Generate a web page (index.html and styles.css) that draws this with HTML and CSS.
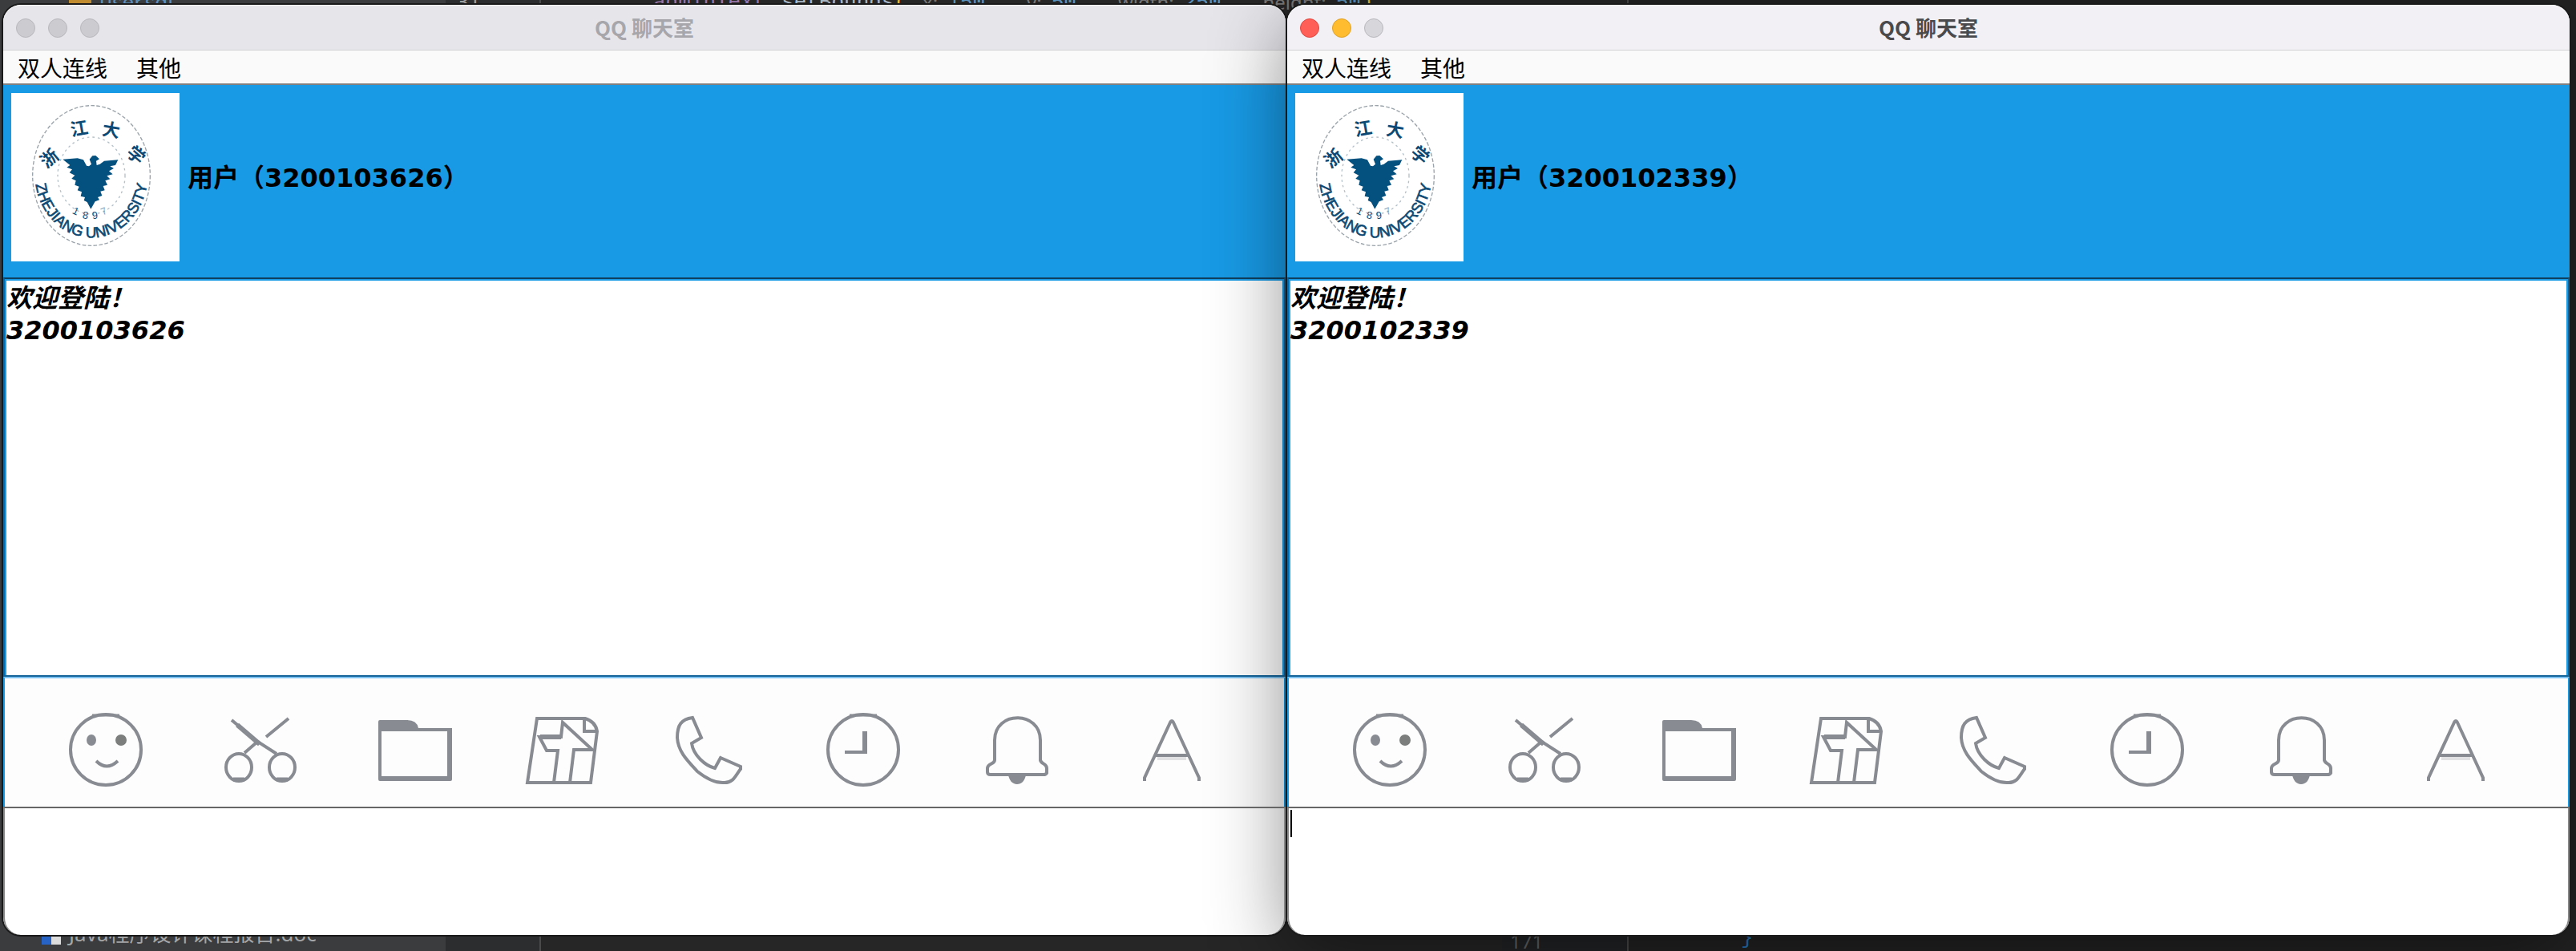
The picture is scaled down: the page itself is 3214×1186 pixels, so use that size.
FILE: index.html
```html
<!DOCTYPE html>
<html lang="zh-CN">
<head>
<meta charset="utf-8">
<title>QQ聊天室</title>
<link rel="stylesheet" href="styles.css">
</head>
<body>
<svg class="defs" aria-hidden="true">
  <symbol id="seal" viewBox="-48 18 630 630">
    <ellipse cx="252" cy="327" rx="220" ry="262" class="ring"/>
    <ellipse cx="252" cy="327" rx="126" ry="144" class="ring faint"/>
    <path fill="#04507f" d="M145 266 200 262 222 268 234 290 243 292 252 284 245 266 256 253 268 252 282 265 270 272 272 288 284 284 300 272 352 268 342 288 322 292 336 300 318 310 332 322 310 328 322 340 304 346 312 362 296 366 302 382 286 386 292 402 276 408 282 418 266 424 250 452 236 426 224 420 228 408 212 404 216 388 200 382 206 368 190 362 194 346 178 338 190 326 170 316 180 304 160 296 172 288Z"/>
    <g class="seal-han">
      <text transform="translate(110 280) rotate(-40)">浙</text>
      <text transform="translate(210 174) rotate(-10)">江</text>
      <text transform="translate(322 180) rotate(10)">大</text>
      <text transform="translate(404 268) rotate(40)">学</text>
    </g>
    <g class="seal-year">
      <text transform="translate(188 472) rotate(25)">1</text>
      <text transform="translate(228 488) rotate(8)">8</text>
      <text transform="translate(267 488) rotate(-8)">9</text>
      <text transform="translate(304 472) rotate(-25)" opacity=".5">7</text>
    </g>
    <path id="seal-arc" fill="none" d="M42 352A212 240 0 0 0 462 352"/>
    <text class="seal-name"><textPath href="#seal-arc" startOffset="50%">ZHEJIANG UNIVERSITY</textPath></text>
  </symbol>
  <symbol id="smile" viewBox="0 0 120 120">
    <circle cx="60" cy="69" r="44"/><path d="M43 26h34" stroke-width="3"/>
    <ellipse cx="42" cy="57" rx="6" ry="7" class="solid"/><circle cx="79" cy="57" r="7" fill="#7c7e7e" stroke="none"/>
    <path d="M48 83Q61 96 75 83"/>
  </symbol>
  <symbol id="scissors" viewBox="0 0 120 120">
    <path d="M27 32 58 58 83 74M98 30 70 53M58 60 43 73"/><path d="M34 38 62 62" stroke-width="6"/>
    <ellipse cx="36" cy="91" rx="16" ry="17"/><ellipse cx="90" cy="91" rx="16" ry="17"/>
    <path d="M29 106h14M83 106h14" stroke-width="5"/>
  </symbol>
  <symbol id="folder" viewBox="0 0 120 120">
    <path class="solid" fill-rule="evenodd" d="M20 34q0-2 2-2H56q12 0 14 10H112V106q0 2-2 2H22q-2 0-2-2ZM24 46V102H106V46Z"/>
  </symbol>
  <symbol id="share" viewBox="0 0 120 120">
    <path d="M28 30H88Q101 34 103 46L95 110H16ZM87 32V46H103"/>
    <path d="M49 110 54 70H40L31 53H58L60 35 97 69H74L69 110"/><path d="M32 53H58" stroke-width="6"/>
  </symbol>
  <symbol id="phone" viewBox="0 0 120 120">
    <path d="M32 29C18 31 13 38 13 54 14 71 25 82 38 96 48 104 61 111 72 110 83 110 85 102 92 93V90L67 79 60 92C48 89 33 76 31 61L43 54Z"/>
  </symbol>
  <symbol id="clock" viewBox="0 0 120 120">
    <circle cx="55" cy="69" r="44"/><path d="M38 26h34" stroke-width="3"/>
    <path class="solid" d="M54 46h6V74H32V70H54Z"/>
  </symbol>
  <symbol id="bell" viewBox="0 0 120 120">
    <path d="M29 82V57C29 20 86 20 86 57V82C87 87 94 86 94 92V98Q93 100 90 100H24Q20 100 20 97V92C20 86 29 87 29 82Z"/>
    <path class="solid" d="M46 100H68C67 107 63 112 57 112S47 107 46 100Z"/>
  </symbol>
  <symbol id="font" viewBox="0 0 120 120">
    <path d="M26 108V104L58 35Q60 31 62 35L94 104V108"/><path d="M40 76H80"/><path d="M42 80H78" stroke="#e1e1e4"/>
  </symbol>
</svg>

<div class="backdrop" aria-hidden="true">
  <div class="tree">
    <div class="file sql"><i class="badge"></i>user.sql</div>
    <div class="file doc"><i class="badge"></i>Java程序设计课程报告.doc</div>
  </div>
  <div class="gutter">31</div>
  <div class="editor">
    <div class="code"><b class="field">adminText</b><b class="call">.setBounds<em>(</em></b><span class="hint">x:</span><b class="num">150</b><span class="hint">y:</span><b class="num">50</b><span class="hint">width:</span><b class="num">250</b><span class="hint">height:</span><b class="num">50<em>);</em></b></div>
    <span class="line">171</span>
  </div>
  <div class="second">
    <span class="brace">}</span>
  </div>
</div>

<main class="desktop">
  <section class="window inactive">
    <header class="titlebar">
      <div class="lights"><button aria-label="关闭"></button><button aria-label="最小化"></button><button aria-label="缩放"></button></div>
      <h1>QQ 聊天室</h1>
    </header>
    <nav class="menubar"><button>双人连线</button><button>其他</button></nav>
    <div class="profile"><svg class="avatar" role="img" aria-label="ZHEJIANG UNIVERSITY"><use href="#seal"/></svg><span>用户（3200103626）</span></div>
    <div class="log"><div class="messages">欢迎登陆！<br>3200103626</div></div>
    <div class="tools">
      <button aria-label="表情"><svg><use href="#smile"/></svg></button>
      <button aria-label="截图"><svg><use href="#scissors"/></svg></button>
      <button aria-label="文件"><svg><use href="#folder"/></svg></button>
      <button aria-label="分享"><svg><use href="#share"/></svg></button>
      <button aria-label="电话"><svg><use href="#phone"/></svg></button>
      <button aria-label="历史"><svg><use href="#clock"/></svg></button>
      <button aria-label="提醒"><svg><use href="#bell"/></svg></button>
      <button aria-label="字体"><svg><use href="#font"/></svg></button>
    </div>
    <div class="compose"><textarea aria-label="输入消息"></textarea></div>
  </section>

  <section class="window active">
    <header class="titlebar">
      <div class="lights"><button class="close" aria-label="关闭"></button><button class="minimize" aria-label="最小化"></button><button aria-label="缩放"></button></div>
      <h1>QQ 聊天室</h1>
    </header>
    <nav class="menubar"><button>双人连线</button><button>其他</button></nav>
    <div class="profile"><svg class="avatar" role="img" aria-label="ZHEJIANG UNIVERSITY"><use href="#seal"/></svg><span>用户（3200102339）</span></div>
    <div class="log"><div class="messages">欢迎登陆！<br>3200102339</div></div>
    <div class="tools">
      <button aria-label="表情"><svg><use href="#smile"/></svg></button>
      <button aria-label="截图"><svg><use href="#scissors"/></svg></button>
      <button aria-label="文件"><svg><use href="#folder"/></svg></button>
      <button aria-label="分享"><svg><use href="#share"/></svg></button>
      <button aria-label="电话"><svg><use href="#phone"/></svg></button>
      <button aria-label="历史"><svg><use href="#clock"/></svg></button>
      <button aria-label="提醒"><svg><use href="#bell"/></svg></button>
      <button aria-label="字体"><svg><use href="#font"/></svg></button>
    </div>
    <div class="compose"><textarea aria-label="输入消息"></textarea><i class="caret"></i></div>
  </section>
</main>
</body>
</html>
```

FILE: styles.css
```css
* { box-sizing: border-box; }

body {
  margin: 0;
  height: 100vh;
  overflow: hidden;
  position: relative;
  background: #232323;
  font-family: "DejaVu Sans", "Noto Sans CJK SC", sans-serif;
}

button {
  padding: 0;
  border: 0;
  background: none;
  font: inherit;
  color: inherit;
}

.defs { position: absolute; width: 0; height: 0; }

/* IDE behind the chat windows */
.backdrop {
  position: absolute;
  inset: 0;
  display: flex;
  overflow: hidden;
  font: 26px/32px "Noto Sans", "Noto Sans CJK SC", sans-serif;
}

.tree {
  width: 556px;
  display: flex;
  flex-direction: column;
  justify-content: space-between;
  background: #3a3c3e;
}

.file { display: flex; align-items: center; gap: 10px; }
.sql { margin: -14px 0 0 86px; color: #5c8fbd; }
.doc { margin: 0 0 6px 52px; color: #a5a6a7; }
.badge { width: 28px; height: 28px; background: #c08a2e; }
.doc .badge { width: 24px; background: linear-gradient(90deg, #2763c4 50%, #dcdcdc 50%); }

.gutter {
  width: 119px;
  margin-top: -14px;
  padding-left: 14px;
  border-right: 2px solid #4a4a4a;
  background: #2b2d2f;
  color: #a0a0a0;
}

.editor {
  width: 1357px;
  display: flex;
  flex-direction: column;
  justify-content: space-between;
  align-items: flex-start;
  border-right: 2px solid #4a4a4a;
  background: #262626;
}

.code {
  display: flex;
  margin: -13px 0 0 140px;
  color: #777;
  font-size: 24px;
  white-space: nowrap;
}
.code b { font: 26px/32px "Liberation Mono", monospace; margin-right: 20px; }
.code .num { color: #5b92bd; margin-right: 52px; }
.code .field { color: #9876aa; margin-right: 4px; }
.code .call { color: #a9b7c6; }
.code .hint { margin-right: 12px; }
.code em { color: #e8ba36; font-style: normal; }

.line {
  align-self: flex-end;
  width: 156px;
  padding-left: 10px;
  background: #222426;
  color: #666;
  font-size: 24px;
  line-height: 24px;
}

.second {
  flex: 1;
  display: flex;
  align-items: flex-end;
  padding-left: 140px;
  color: #287bc0;
  font-family: "Liberation Mono", monospace;
}

/* Windows */
.desktop {
  position: relative;
  height: 100%;
  padding: 6px 8px 20px 4px;
  display: grid;
  grid-template-columns: 1fr 1fr;
  gap: 2px;
}

.window {
  display: flex;
  flex-direction: column;
  min-width: 0;
  border-radius: 22px;
  background: #fff;
  box-shadow: 0 0 0 2px #1a1a1a;
}
.window.active { box-shadow: 0 0 0 2px #1a1a1a, 0 24px 96px rgba(0, 0, 0, .45); }

.titlebar {
  display: grid;
  grid-template-columns: 1fr auto 1fr;
  align-items: center;
  height: 57px;
  padding: 0 16px;
  border-top: 1px solid #f8f8fa;
  border-bottom: 1px solid #d2d1d3;
  border-radius: 22px 22px 0 0;
  background: #f2f0f5;
}
.inactive .titlebar { background: #e6e5ea; }

.titlebar h1 {
  margin: 0;
  padding-bottom: 2px;
  color: #4a494b;
  font: bold 26px/32px "Noto Sans CJK SC", sans-serif;
}
.inactive h1 { color: #a7a6aa; }

.lights { display: flex; gap: 16px; }
.lights button {
  width: 24px;
  height: 24px;
  border: 1px solid #b9b8bc;
  border-radius: 50%;
  background: #d7d6da;
}
.inactive .lights button { background: #cccbcf; }
.lights .close { background: #ff5f57; border-color: #e2463f; }
.lights .minimize { background: #febc2e; border-color: #e0a123; }

.menubar {
  display: flex;
  gap: 36px;
  height: 43px;
  padding: 0 18px;
  border-bottom: 2px solid #808080;
  background: #fafafa;
  font: 28px/40px "Noto Sans CJK SC", sans-serif;
  color: #000;
}

.profile {
  display: flex;
  align-items: center;
  gap: 10px;
  height: 240px;
  padding: 0 10px 10px;
  background: #189ae5;
  font-size: 32px;
  font-weight: bold;
}
.profile span { padding-bottom: 4px; }

.avatar { width: 210px; height: 210px; background: #fff; }

.ring { fill: none; stroke: #9aa3aa; stroke-width: 4; stroke-dasharray: 14 7; }
.faint { stroke: #b4c0c8; stroke-dasharray: 8 12; }
.seal-han, .seal-year, .seal-name { fill: #0c4a75; text-anchor: middle; }
.seal-han { font: bold 66px "Noto Sans CJK SC", sans-serif; }
.seal-year { font: 38px "Liberation Sans", sans-serif; }
.seal-name { font: 56px "Liberation Sans", sans-serif; stroke: #0c4a75; stroke-width: 2; }

.log {
  flex: 1;
  border: 2px solid #14649a;
  border-top-color: #10405f;
}

.messages {
  height: 100%;
  padding: 2px 0;
  border: 2px solid #189ae5;
  border-bottom: 0;
  font: italic bold 32px/40px "DejaVu Sans", "Noto Sans CJK SC", sans-serif;
}

.tools {
  display: flex;
  height: 162px;
  padding-left: 31px;
  border: 2px solid #189ae5;
  border-top-color: #7cc1f0;
  border-bottom: 0;
  background: #fdfdfd;
}
.tools button { width: 190px; display: flex; align-items: center; justify-content: center; }
.tools svg { width: 120px; height: 120px; fill: none; stroke: #888b92; stroke-width: 4; }
.solid { fill: #888b92; stroke: none; }

.compose {
  position: relative;
  height: 160px;
  border: 2px solid #888;
  border-top-color: #666;
  border-bottom: 0;
  border-radius: 0 0 22px 22px;
}
.compose textarea {
  display: block;
  width: 100%;
  height: 100%;
  padding: 2px;
  border: 0;
  outline: 0;
  resize: none;
  background: transparent;
  font: 28px/36px "DejaVu Sans", "Noto Sans CJK SC", sans-serif;
}
.caret { position: absolute; left: 2px; top: 2px; width: 2px; height: 34px; background: #000; }
```
